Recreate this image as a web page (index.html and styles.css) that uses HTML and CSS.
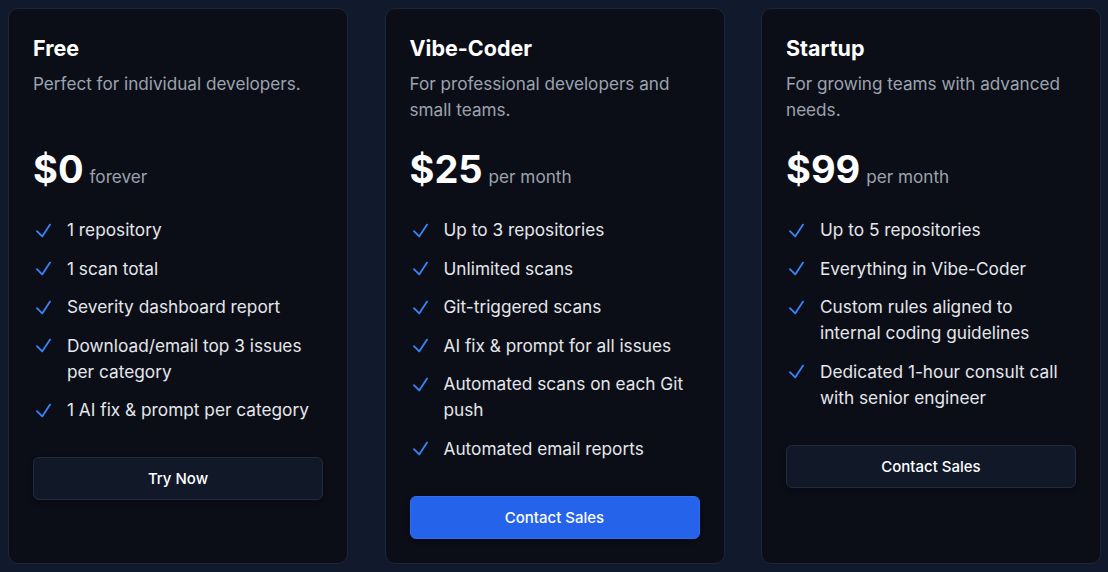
FILE: index.html
```html
<!DOCTYPE html>
<html lang="en">
<head>
<meta charset="utf-8">
<title>Pricing</title>
<link rel="stylesheet" href="styles.css">
</head>
<body>
<div class="plans">
  <section class="card">
    <h2 class="title">Free</h2>
    <p class="desc">Perfect for individual developers.</p>
    <div class="price"><span class="amount">$0</span><span class="period">forever</span></div>
    <ul class="features">
      <li><svg class="check" viewBox="0 0 24 24"><path d="M4.5 12.75l6 6 9-13.5"/></svg><span>1 repository</span></li>
      <li><svg class="check" viewBox="0 0 24 24"><path d="M4.5 12.75l6 6 9-13.5"/></svg><span>1 scan total</span></li>
      <li><svg class="check" viewBox="0 0 24 24"><path d="M4.5 12.75l6 6 9-13.5"/></svg><span>Severity dashboard report</span></li>
      <li><svg class="check" viewBox="0 0 24 24"><path d="M4.5 12.75l6 6 9-13.5"/></svg><span>Download/email top 3 issues per category</span></li>
      <li><svg class="check" viewBox="0 0 24 24"><path d="M4.5 12.75l6 6 9-13.5"/></svg><span>1 AI fix &amp; prompt per category</span></li>
    </ul>
    <button class="btn">Try Now</button>
  </section>
  <section class="card">
    <h2 class="title">Vibe-Coder</h2>
    <p class="desc">For professional developers and small teams.</p>
    <div class="price"><span class="amount">$25</span><span class="period">per month</span></div>
    <ul class="features">
      <li><svg class="check" viewBox="0 0 24 24"><path d="M4.5 12.75l6 6 9-13.5"/></svg><span>Up to 3 repositories</span></li>
      <li><svg class="check" viewBox="0 0 24 24"><path d="M4.5 12.75l6 6 9-13.5"/></svg><span>Unlimited scans</span></li>
      <li><svg class="check" viewBox="0 0 24 24"><path d="M4.5 12.75l6 6 9-13.5"/></svg><span>Git-triggered scans</span></li>
      <li><svg class="check" viewBox="0 0 24 24"><path d="M4.5 12.75l6 6 9-13.5"/></svg><span>AI fix &amp; prompt for all issues</span></li>
      <li><svg class="check" viewBox="0 0 24 24"><path d="M4.5 12.75l6 6 9-13.5"/></svg><span>Automated scans on each Git push</span></li>
      <li><svg class="check" viewBox="0 0 24 24"><path d="M4.5 12.75l6 6 9-13.5"/></svg><span>Automated email reports</span></li>
    </ul>
    <button class="btn btn-primary">Contact Sales</button>
  </section>
  <section class="card">
    <h2 class="title">Startup</h2>
    <p class="desc">For growing teams with advanced needs.</p>
    <div class="price"><span class="amount">$99</span><span class="period">per month</span></div>
    <ul class="features">
      <li><svg class="check" viewBox="0 0 24 24"><path d="M4.5 12.75l6 6 9-13.5"/></svg><span>Up to 5 repositories</span></li>
      <li><svg class="check" viewBox="0 0 24 24"><path d="M4.5 12.75l6 6 9-13.5"/></svg><span>Everything in Vibe-Coder</span></li>
      <li><svg class="check" viewBox="0 0 24 24"><path d="M4.5 12.75l6 6 9-13.5"/></svg><span>Custom rules aligned to internal coding guidelines</span></li>
      <li><svg class="check" viewBox="0 0 24 24"><path d="M4.5 12.75l6 6 9-13.5"/></svg><span>Dedicated 1-hour consult call with senior engineer</span></li>
    </ul>
    <button class="btn">Contact Sales</button>
  </section>
</div>
</body>
</html>
```
FILE: styles.css
```css
* { box-sizing: border-box; }
html, body { margin: 0; padding: 0; }
body {
  background: #111a2c;
  font-family: Inter, "Noto Sans", sans-serif;
  color: #f3f4f6;
  width: 1108px;
  height: 572px;
  overflow: hidden;
}
.plans {
  display: grid;
  grid-template-columns: repeat(3, 340px);
  column-gap: 36.5px;
  padding: 8px 8px 0 8px;
  align-items: stretch;
}
.card {
  background: #0b0e17;
  border: 1px solid #1e2638;
  border-radius: 10px;
  padding: 24px;
  display: flex;
  flex-direction: column;
  align-items: stretch;
}
.title {
  margin: 0;
  font-size: 21.5px;
  line-height: 30px;
  font-weight: 700;
  color: #ffffff;
}
.desc {
  margin: 8px 0 0 0;
  font-size: 17.15px;
  line-height: 26px;
  color: #9ca3af;
  min-height: 52px;
}
.price {
  margin-top: 27px;
  display: flex;
  align-items: baseline;
  gap: 6px;
}
.amount {
  font-size: 38px;
  line-height: 38px;
  font-weight: 700;
  color: #ffffff;
}
.period {
  font-size: 17.15px;
  color: #9ca3af;
}
.features {
  list-style: none;
  margin: 29px 0 0 0;
  padding: 0;
  display: flex;
  flex-direction: column;
  gap: 12.5px;
}
.features li {
  display: flex;
  align-items: flex-start;
  font-size: 17.25px;
  line-height: 26px;
  color: #e5e7eb;
}
.check {
  flex: none;
  width: 21px;
  height: 21px;
  margin: 2.5px 13px 0 0;
  fill: none;
  stroke: #3b82f6;
  stroke-width: 2.1;
  stroke-linecap: round;
  stroke-linejoin: round;
}
.btn {
  margin-top: 34px;
  height: 43px;
  width: 100%;
  border-radius: 6px;
  border: 1px solid #222c40;
  background: #111828;
  color: #ffffff;
  font-family: Inter, "Noto Sans", sans-serif;
  font-size: 15px;
  font-weight: 500;
  box-shadow: 0 2px 4px rgba(0,0,0,0.35);
  cursor: pointer;
}
.btn-primary {
  background: #2563eb;
  border-color: #2f6cf0;
}
```
